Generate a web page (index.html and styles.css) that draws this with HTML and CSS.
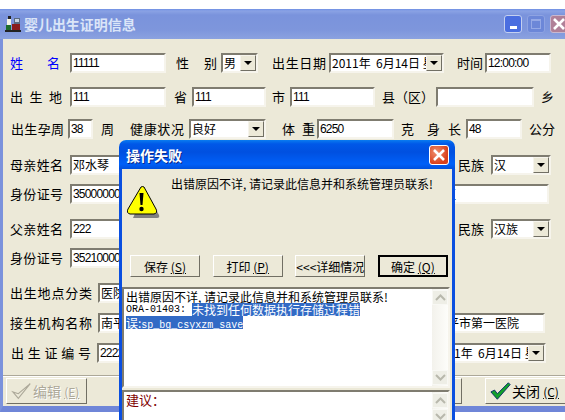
FILE: index.html
```html
<!DOCTYPE html>
<html lang="zh-CN">
<head>
    <meta charset="UTF-8">
    <meta name="viewport" content="width=device-width, initial-scale=1.0">
    <title>婴儿出生证明信息</title>
    <link rel="stylesheet" href="styles.css">
</head>
<body>
    <div class="window">
        <div class="titlebar">
            <svg class="app-icon" width="16" height="16" viewBox="0 0 16 16">
                <rect x="9" y="2" width="6" height="6" fill="#5a6a80"/>
                <rect x="10" y="3" width="4" height="3" fill="#c8d4e4"/>
                <rect x="7" y="8" width="8" height="6" fill="#8a1c1c"/>
                <rect x="0" y="14" width="16" height="2" fill="#222"/>
                <rect x="3" y="0" width="3" height="3" fill="#222"/>
                <rect x="2" y="3" width="4" height="6" fill="#f4f4e8"/>
                <rect x="1" y="9" width="5" height="5" fill="#1d6b2c"/>
            </svg>
            <span class="title-text">婴儿出生证明信息</span>
            <div class="caption-btns">
                <span class="cap cap-min"><i></i></span>
                <span class="cap cap-max"><i></i></span>
                <span class="cap cap-close">
                    <svg width="14" height="14" viewBox="0 0 14 14"><path d="M2 2l10 10M12 2L2 12" stroke="#fff" stroke-width="2.6"/></svg>
                </span>
            </div>
        </div>

        <div class="form">
            <div class="row">
                <span class="lbl w50 blue">姓名</span>
                <span class="field w96 ml10 num">11111</span>
                <span class="lbl w41 ml10">性别</span>
                <span class="field combo w37 ml4"><span class="val">男</span><b class="drop"></b></span>
                <span class="lbl w54 ml14">出生日期</span>
                <span class="field combo w115 ml3"><span class="val">2011年&nbsp; 6月14日 星期二</span><b class="drop"></b></span>
                <span class="lbl w26 ml13">时间</span>
                <span class="field w66 ml2 num">12:00:00</span>
            </div>
            <div class="row r2">
                <span class="lbl w52">出生地</span>
                <span class="field w96 ml8 num">111</span>
                <span class="lbl w12 ml8">省</span>
                <span class="field w74 ml6 num">111</span>
                <span class="lbl w13 ml6">市</span>
                <span class="field w85 ml5 num">111</span>
                <span class="lbl w51 ml7">县（区）</span>
                <span class="field w98 ml3"></span>
                <span class="lbl w12 ml7">乡</span>
            </div>
            <div class="row r3">
                <span class="lbl w53 ml1">出生孕周</span>
                <span class="field w25 ml4 num">38</span>
                <span class="lbl w12 ml8">周</span>
                <span class="lbl w54 ml17">健康状况</span>
                <span class="field combo w77 ml5"><span class="val">良好</span><b class="drop"></b></span>
                <span class="lbl w33 ml16">体重</span>
                <span class="field w77 ml2 num">6250</span>
                <span class="lbl w12 ml7">克</span>
                <span class="lbl w34 ml14">身长</span>
                <span class="field w56 ml5 num">48</span>
                <span class="lbl w26 ml7">公分</span>
            </div>
            <div class="row r4">
                <span class="lbl w53">母亲姓名</span>
                <span class="field w300 ml7">邓水琴</span>
                <span class="lbl w26 ml88">民族</span>
                <span class="field combo w60 ml7"><span class="val">汉</span><b class="drop"></b></span>
            </div>
            <div class="row r5">
                <span class="lbl w53">身份证号</span>
                <span class="field w300 ml7 num">350000000000000000</span>
                <span class="field w144 ml35">南平市区</span>
            </div>
            <div class="row r6">
                <span class="lbl w53">父亲姓名</span>
                <span class="field w300 ml7 num">222</span>
                <span class="lbl w26 ml88">民族</span>
                <span class="field combo w60 ml7"><span class="val">汉族</span><b class="drop"></b></span>
            </div>
            <div class="row r7">
                <span class="lbl w53">身份证号</span>
                <span class="field w300 ml7 num">352100000000000000</span>
            </div>
            <div class="row r8">
                <span class="lbl w82">出生地点分类</span>
                <span class="field combo w120 ml6"><span class="val">医院</span><b class="drop"></b></span>
            </div>
            <div class="row r9">
                <span class="lbl w82">接生机构名称</span>
                <span class="field w447 ml6 spread"><span>南平市</span><span>南平市第一医院</span></span>
            </div>
            <div class="row r9">
                <span class="lbl w80 ml1">出生证编号</span>
                <span class="field w120 ml6 num">2222222222</span>
                <span class="field combo w115 ml214"><span class="val">2011年&nbsp; 6月14日 星期二</span><b class="drop"></b></span>
            </div>
        </div>

        <div class="toolbar">
            <button class="tool-btn disabled">
                <svg width="22" height="20" viewBox="0 0 24 20"><path d="M2 11l6 7L21 2 8 13z" fill="#ece9d8" stroke="#aca899" stroke-width="1.2"/></svg>
                <span>编辑 <u class="key">(E)</u></span>
            </button>
            <button class="tool-btn hidden-btn"></button>
            <button class="tool-btn close-btn">
                <svg width="22" height="20" viewBox="0 0 24 20"><path d="M1 11l4-2 3 4L20 1l2 2L8 19z" fill="#12a12c" stroke="#0b2a6b" stroke-width="1"/></svg>
                <span>关闭 <u class="key">(C)</u></span>
            </button>
        </div>
    </div>

    <div class="dialog">
        <div class="dialog-title">
            <span>操作失败</span>
            <span class="dialog-close">
                <svg width="14" height="14" viewBox="0 0 14 14"><path d="M2 2l10 10M12 2L2 12" stroke="#fff" stroke-width="2.6"/></svg>
            </span>
        </div>
        <div class="dialog-body">
            <div class="message">
                <svg class="warn" width="34" height="35" viewBox="0 0 34 35">
                    <path d="M18 4l14 25q1 3-2 3H6z" fill="#808080"/>
                    <path d="M14 1q1.500-1 3 0l12 22q2 4-2 5H3q-4-1-2-5z" fill="#ffff00" stroke="#000" stroke-width="1"/>
                    <path d="M12.500 7h4l-1 12h-2z" fill="#000"/>
                    <circle cx="14.500" cy="23" r="2.200" fill="#000"/>
                </svg>
                <p class="msg-text">出错原因不详, 请记录此信息并和系统管理员联系!</p>
            </div>
            <div class="dialog-btns">
                <button class="btn">保存 <u>(S)</u></button>
                <button class="btn">打印 <u>(P)</u></button>
                <button class="btn">&lt;&lt;&lt;详细情况</button>
                <button class="btn default">确定 <u>(Q)</u></button>
            </div>
            <div class="memo memo-top">
                <div class="memo-text">
                    <div class="line">出错原因不详, 请记录此信息并和系统管理员联系!</div>
                    <div class="line"><span class="mono">ORA-01403: </span><span class="sel">未找到任何数据执行存储过程错</span></div>
                    <div class="line"><span class="sel">误:<span class="mono">sp_bg_csyxzm_save</span></span></div>
                </div>
                <div class="scroll">
                    <span class="scroll-btn"><svg width="11" height="7" viewBox="0 0 11 7"><path d="M1 6l4.500-4.500L10 6" fill="none" stroke="#b8b8ac" stroke-width="2"/></svg></span>
                    <span class="scroll-btn"><svg width="11" height="7" viewBox="0 0 11 7"><path d="M1 1l4.500 4.500L10 1" fill="none" stroke="#b8b8ac" stroke-width="2"/></svg></span>
                </div>
            </div>
            <div class="memo memo-bottom">
                <div class="memo-text advice">建议：</div>
                <div class="scroll">
                    <span class="scroll-btn"><svg width="11" height="7" viewBox="0 0 11 7"><path d="M1 6l4.500-4.500L10 6" fill="none" stroke="#b8b8ac" stroke-width="2"/></svg></span>
                    <span class="scroll-btn"><svg width="11" height="7" viewBox="0 0 11 7"><path d="M1 1l4.500 4.500L10 1" fill="none" stroke="#b8b8ac" stroke-width="2"/></svg></span>
                </div>
            </div>
        </div>
    </div>
</body>
</html>
```

FILE: styles.css
```css
html, body { margin: 0; height: 420px; overflow: hidden; background: #fff; }
body { font-family: "Noto Sans CJK SC", "Liberation Sans", sans-serif; font-size: 12px; color: #000; position: relative; }

/* main window */
.window { width: 572px; margin-top: 9px; background: #ece9d8; border-left: 3px solid #7b92dc; border-bottom: 6px solid #6f86d8; box-sizing: border-box; }
.titlebar { height: 30px; margin-left: -3px; padding: 0 4px 0 5px; display: flex; align-items: center; background: linear-gradient(#6f90e4 0, #8aa2e4 2px, #7a93dc 6px, #7e96dc 70%, #8ba2e0 100%); box-sizing: border-box; }
.app-icon { flex: none; margin-right: 3px; }
.title-text { color: #dbe5f8; font-weight: bold; font-size: 14px; letter-spacing: -.05px; }
.caption-btns { margin-left: auto; display: flex; gap: 5px; }
.cap { width: 18px; height: 18px; border: 1px solid #c4d0f0; border-radius: 3px; display: flex; align-items: center; justify-content: center; box-sizing: border-box; }
.cap-min { background: #4a6ee0; align-items: flex-end; }
.cap-min i { width: 7px; height: 3px; margin-bottom: 3px; background: #fff; }
.cap-max { background: #6c87d8; border-color: #8ea3e2; }
.cap-max i { width: 10px; height: 10px; border: 1px solid #95a9e6; border-top-width: 2px; box-sizing: border-box; }
.cap-close { background: #b08098; border-color: #c8b8d0; }

/* form rows */
.form { padding: 14px 0 0 7px; }
.row { display: flex; align-items: center; height: 20px; }
.r2 { margin-top: 14px; }
.r3 { margin-top: 12px; }
.r4 { margin-top: 16px; }
.r5 { margin-top: 9px; }
.r6 { margin-top: 15px; }
.r7 { margin-top: 9px; }
.r8 { margin-top: 15px; }
.r9 { margin-top: 10px; }

.lbl { flex: none; text-align: justify; text-align-last: justify; font-size: 13px; line-height: 20px; }
.blue { color: #0000ff; }
.field { flex: none; height: 20px; line-height: 16px; padding: 0 1px; background: #fff; border: 2px solid; border-color: #7f7c70 #f6f4ec #f6f4ec #7f7c70; box-sizing: border-box; white-space: nowrap; overflow: hidden; }
.num { font-family: "Liberation Sans", sans-serif; font-size: 12px; letter-spacing: -.8px; }
.combo { display: flex; padding: 0 0 0 1px; }
.combo .val { flex: 1; min-width: 0; overflow: hidden; }
.drop { flex: none; width: 16px; height: 16px; background: #ece9d8; border: 1px solid; border-color: #f6f4ec #716f64 #716f64 #f6f4ec; box-sizing: border-box; position: relative; }
.drop::after { content: ""; position: absolute; left: 3px; top: 5px; border: 4px solid transparent; border-top: 4px solid #000; border-bottom: 0; }
.spread { display: flex; justify-content: space-between; padding-right: 24px; }

.w12 { width: 12px; } .w13 { width: 13px; } .w25 { width: 25px; } .w26 { width: 26px; }
.w33 { width: 33px; } .w34 { width: 34px; } .w37 { width: 37px; } .w41 { width: 41px; }
.w50 { width: 50px; } .w51 { width: 51px; } .w52 { width: 52px; } .w53 { width: 53px; }
.w54 { width: 54px; } .w56 { width: 56px; } .w60 { width: 60px; } .w66 { width: 66px; }
.w74 { width: 74px; } .w77 { width: 77px; } .w80 { width: 80px; } .w82 { width: 82px; }
.w85 { width: 85px; } .w96 { width: 96px; } .w98 { width: 98px; } .w115 { width: 115px; }
.w120 { width: 120px; } .w144 { width: 144px; } .w300 { width: 300px; } .w447 { width: 447px; }
.ml1 { margin-left: 1px; } .ml2 { margin-left: 2px; } .ml3 { margin-left: 3px; } .ml4 { margin-left: 4px; }
.ml5 { margin-left: 5px; } .ml6 { margin-left: 6px; } .ml7 { margin-left: 7px; } .ml8 { margin-left: 8px; }
.ml10 { margin-left: 10px; } .ml13 { margin-left: 13px; } .ml14 { margin-left: 14px; } .ml16 { margin-left: 16px; }
.ml17 { margin-left: 17px; } .ml35 { margin-left: 35px; } .ml88 { margin-left: 88px; } .ml214 { margin-left: 214px; }

/* bottom toolbar */
.toolbar { margin-top: 12px; padding: 2px 0 1px 3px; height: 31px; display: flex; border-top: 1px solid #aca899; box-shadow: inset 0 1px 0 #fff; box-sizing: border-box; }
.tool-btn { width: 81px; height: 26px; padding: 0 0 0 4px; display: flex; align-items: center; font: 14px "Noto Sans CJK SC", sans-serif; color: #000; background: #ece9d8; border: 1px solid; border-color: #fff #716f64 #716f64 #fff; white-space: nowrap; }
.key { font-size: 12px; }
.disabled { color: #aca899; text-shadow: 1px 1px 0 #fff; }
.hidden-btn { margin-left: 293px; width: 82px; }
.close-btn { margin-left: 23px; width: 84px; }

/* error dialog */
.dialog { position: absolute; left: 119px; top: 140px; width: 336px; height: 300px; display: flex; flex-direction: column; border-radius: 7px 7px 0 0; overflow: hidden; }
.dialog-title { height: 29px; flex: none; padding: 0 6px 0 7px; display: flex; align-items: center; justify-content: space-between; color: #fff; font-weight: bold; font-size: 14px; text-shadow: 1px 1px 0 #0a2a8c; background: linear-gradient(#0a7cf0 0, #0058e8 4px, #0050e0 12px, #0060f8 24px, #0050dc 100%); }
.dialog-close { width: 20px; height: 20px; display: flex; align-items: center; justify-content: center; background: radial-gradient(circle at 35% 35%, #f09070, #d8401c 70%); border: 1px solid #fff; border-radius: 3px; box-sizing: border-box; text-shadow: none; }
.dialog-body { flex: 1; background: #ece9d8; border: solid #0a4fe0; border-width: 0 3px; min-height: 0; }
.message { height: 86px; display: flex; align-items: flex-start; }
.warn { flex: none; margin: 17px 0 0 5px; }
.msg-text { margin: 7px 0 0 10px; line-height: 16px; white-space: nowrap; }
.dialog-btns { display: flex; justify-content: space-between; padding: 0 4px 0 8px; }
.btn { width: 70px; height: 22px; padding: 0; font: 12px "Noto Sans CJK SC", sans-serif; background: #ece9d8; border: 1px solid; border-color: #fff #716f64 #716f64 #fff; white-space: nowrap; }
.default { border: 2px solid #000; }
.memo { display: flex; margin-right: 2px; background: #fff; border: 2px solid; border-color: #7f7c70 #f6f4ec #f6f4ec #7f7c70; box-sizing: border-box; }
.memo-top { height: 101px; margin-top: 10px; }
.memo-bottom { height: 60px; margin-top: 2px; }
.memo-text { flex: 1; padding: 1px 0 0 2px; font-size: 12px; white-space: nowrap; overflow: hidden; }
.line { height: 13px; line-height: 13px; display: flex; }
.mono { font-family: "Liberation Mono", monospace; font-size: 10px; white-space: pre; }
.sel { display: block; height: 13px; line-height: 13px; background: #316ac5; color: #fff; }
.advice { color: #800000; padding-top: 1px; font-size: 13px; line-height: 14px; }
.scroll { flex: none; width: 16px; display: flex; flex-direction: column; justify-content: space-between; padding: 1px 0; background: linear-gradient(90deg, #f3f2ec, #fdfdfa); box-sizing: border-box; }
.scroll-btn { height: 15px; display: flex; align-items: center; justify-content: center; background: #eeeee6; border: 1px solid #f8f8f4; box-sizing: border-box; }
.memo-bottom .scroll { justify-content: flex-start; gap: 1px; }
```
